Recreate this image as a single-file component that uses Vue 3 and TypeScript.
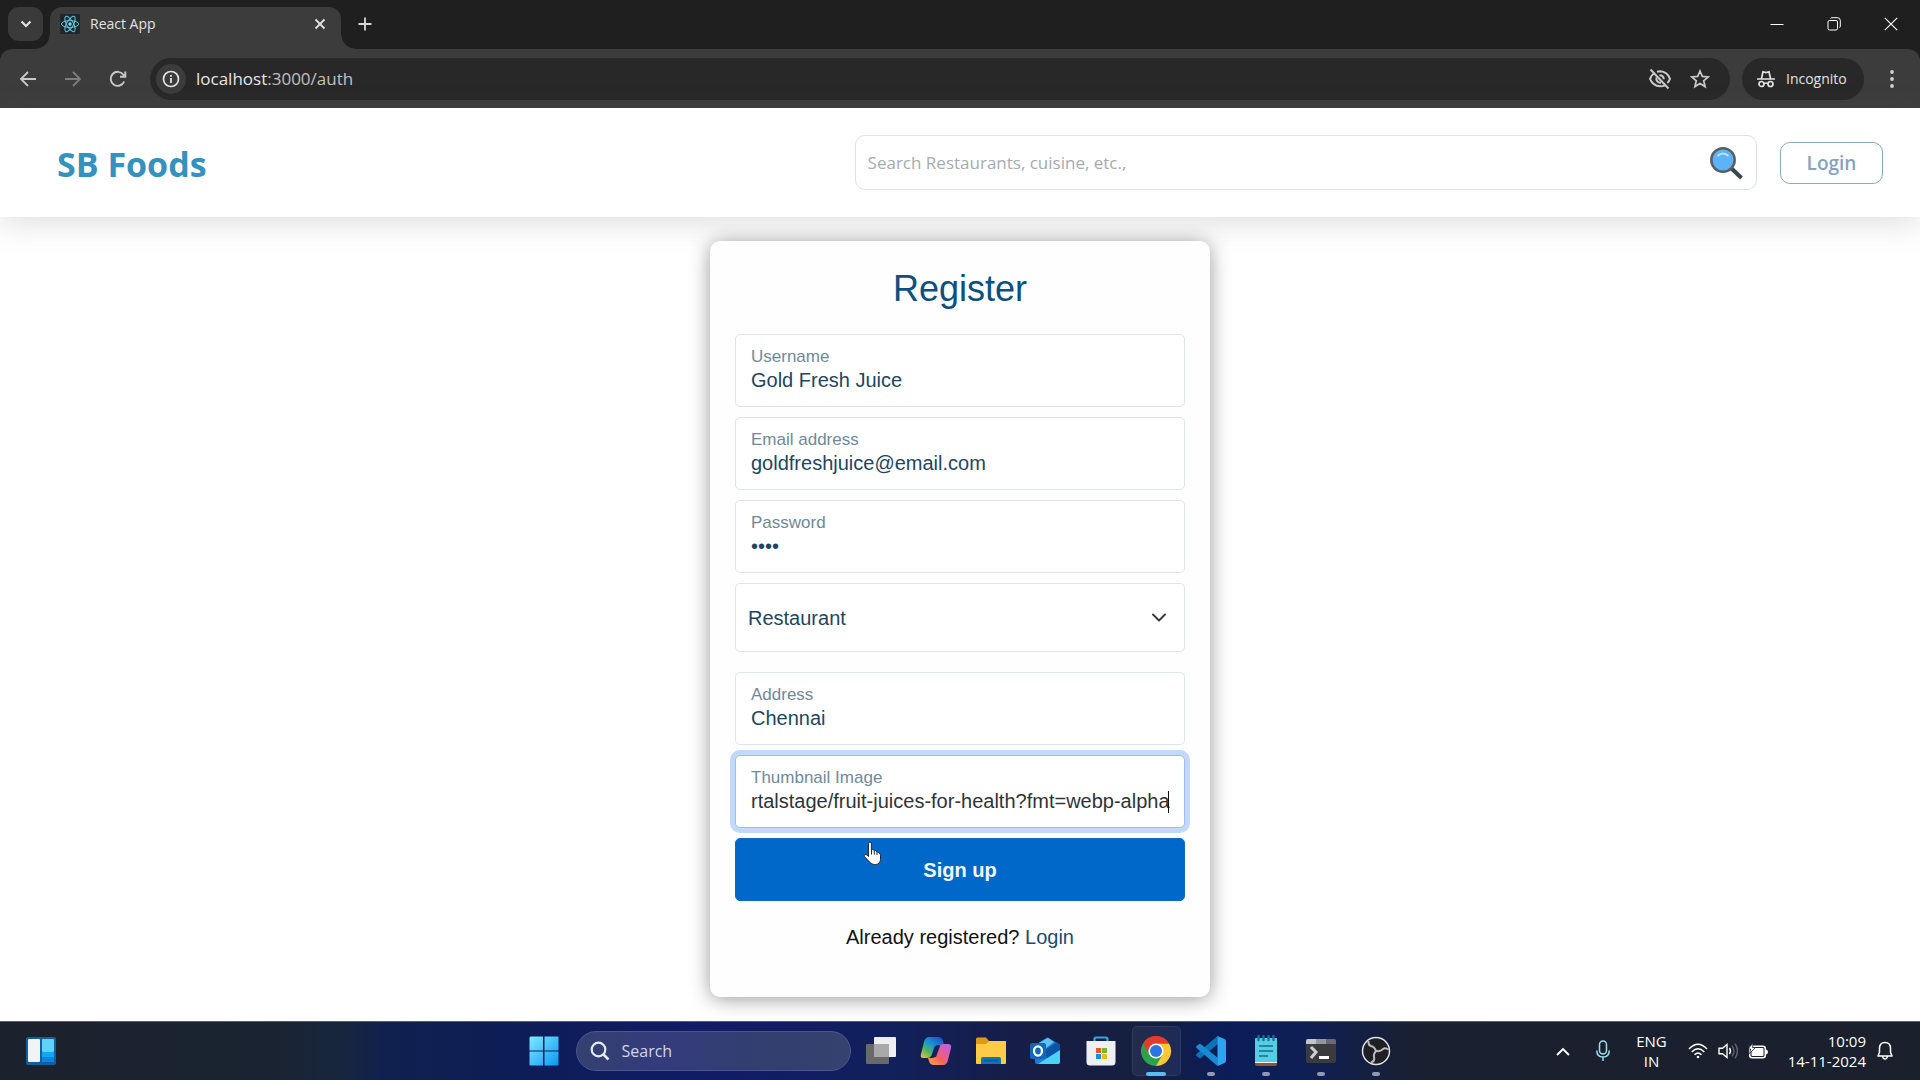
<script setup lang="ts">
import { ref } from 'vue'

interface Field {
  id: string
  label: string
  type: string
  value: string
  focused?: boolean
}

const accountFields = ref<Field[]>([
  { id: 'username', label: 'Username', type: 'text', value: 'Gold Fresh Juice' },
  { id: 'email', label: 'Email address', type: 'email', value: 'goldfreshjuice@email.com' },
  { id: 'password', label: 'Password', type: 'password', value: '1234' },
])

const restaurantFields = ref<Field[]>([
  { id: 'address', label: 'Address', type: 'text', value: 'Chennai' },
  {
    id: 'thumbnail',
    label: 'Thumbnail Image',
    type: 'text',
    value: 'rtalstage/fruit-juices-for-health?fmt=webp-alpha',
    focused: true,
  },
])

const userType = ref('Restaurant')
const query = ref('')
</script>

<template>
  <div class="screen">
    <header class="browser">
      <div class="tabs">
        <button class="tab-list" aria-label="Search tabs">
          <svg width="12" height="8" viewBox="0 0 12 8"><path d="M1.5 1.5 6 6l4.500-4.500" fill="none" stroke="#e3e3e3" stroke-width="2.200" /></svg>
        </button>
        <div class="tab">
          <svg class="favicon" width="20" height="20" viewBox="0 0 20 20">
            <rect width="20" height="20" rx="1" fill="#20262c" />
            <g fill="none" stroke="#61c5de" stroke-width="1">
              <ellipse cx="10" cy="10" rx="8.600" ry="3.400" />
              <ellipse cx="10" cy="10" rx="8.600" ry="3.400" transform="rotate(60 10 10)" />
              <ellipse cx="10" cy="10" rx="8.600" ry="3.400" transform="rotate(120 10 10)" />
            </g>
            <circle cx="10" cy="10" r="1.700" fill="#7fdcf2" />
          </svg>
          <span class="tab-title">React App</span>
          <button class="bare" aria-label="Close tab">
            <svg width="12" height="12" viewBox="0 0 12 12"><path d="m1.500 1.500 9 9m0-9-9 9" stroke="#e3e3e3" stroke-width="1.800" /></svg>
          </button>
        </div>
        <button class="bare new-tab" aria-label="New tab">
          <svg width="14" height="14" viewBox="0 0 14 14"><path d="M7 .5v13M.5 7h13" stroke="#d6d6d6" stroke-width="1.800" /></svg>
        </button>
        <div class="window-controls">
          <button class="bare" aria-label="Minimize"><svg width="14" height="14" viewBox="0 0 14 14"><path d="M.5 7.500h13" stroke="#fff" /></svg></button>
          <button class="bare" aria-label="Restore">
            <svg width="14" height="14" viewBox="0 0 14 14" fill="none" stroke="#fff"><rect x="1" y="3.500" width="9.500" height="9.500" rx="1.500" /><path d="M3.500 1.500q.5-.8 1.500-.8h5.500q2.800 0 2.800 2.800V9q0 1.200-.8 1.600" /></svg>
          </button>
          <button class="bare" aria-label="Close"><svg width="14" height="14" viewBox="0 0 14 14"><path d="m.8.800 12.400 12.400m0-12.400L.8 13.200" stroke="#fff" stroke-width="1.200" /></svg></button>
        </div>
      </div>
      <div class="toolbar">
        <nav class="history">
          <button class="bare" aria-label="Back"><svg width="18" height="18" viewBox="0 0 18 18"><path d="M17 9H2m7-7L2 9l7 7" fill="none" stroke="#c9c9c9" stroke-width="1.800" /></svg></button>
          <button class="bare" aria-label="Forward"><svg width="18" height="18" viewBox="0 0 18 18"><path d="M1 9h15M9 2l7 7-7 7" fill="none" stroke="#7d7d7d" stroke-width="1.800" /></svg></button>
          <button class="bare" aria-label="Reload"><svg width="18" height="18" viewBox="0 0 18 18"><path d="M15.200 11.500a7 7 0 1 1-.8-6.800l1.800 2M16.300 1.500v5.300H11" fill="none" stroke="#c9c9c9" stroke-width="1.900" /></svg></button>
        </nav>
        <div class="omnibox">
          <span class="site-info">
            <svg width="18" height="18" viewBox="0 0 18 18"><circle cx="9" cy="9" r="7.500" fill="none" stroke="#e3e3e3" stroke-width="1.700" /><path d="M9 8v5M9 5v1.800" stroke="#e3e3e3" stroke-width="1.800" /></svg>
          </span>
          <span class="url"><b>localhost</b>:3000/auth</span>
          <svg width="24" height="22" viewBox="0 0 24 22" fill="none" stroke="#c9c9c9" stroke-width="2">
            <path d="M6.500 5Q3.500 7 2 10.800 5 17.800 12 18.300q3 0 5.200-1M9 3.700q1.500-.4 3-.4 7.200.3 10 7.500-1 2.500-2.700 4.200" />
            <path d="M8.500 9.500q-1 4.500 4.500 5.500M11.500 7.200q4 0 4.300 4" />
            <path d="m2.500 1.500 18 19" />
          </svg>
          <svg width="20" height="20" viewBox="0 0 20 20"><path d="m10 2 2.300 5.400 5.900.5-4.500 3.900 1.400 5.800-5.100-3.100-5.100 3.100 1.400-5.800-4.500-3.900 5.900-.5z" fill="none" stroke="#c9c9c9" stroke-width="1.700" /></svg>
        </div>
        <div class="incognito">
          <svg width="18" height="18" viewBox="0 0 18 18" fill="none" stroke="#e3e3e3" stroke-width="1.700">
            <path d="M0 9h18M4.500 8.500 6 1.800l3 .8 3-.8 1.500 6.700" /><circle cx="4.500" cy="14" r="2.500" /><circle cx="13.500" cy="14" r="2.500" /><path d="M7 13.500q2-1 4 0" />
          </svg>
          <span>Incognito</span>
        </div>
        <button class="bare menu" aria-label="Menu"><svg width="4" height="20" viewBox="0 0 4 20" fill="#d0d0d0"><circle cx="2" cy="3" r="1.900" /><circle cx="2" cy="10" r="1.900" /><circle cx="2" cy="17" r="1.900" /></svg></button>
      </div>
    </header>

    <div class="site-header">
      <h1 class="brand">SB Foods</h1>
      <form class="site-search" role="search" @submit.prevent>
        <input v-model="query" type="text" aria-label="Search" placeholder="Search Restaurants, cuisine, etc.," />
        <button class="bare" aria-label="Search">
          <svg width="34" height="34" viewBox="0 0 34 34">
            <path d="m22 22 10.500 10" stroke="#37474f" stroke-width="4" />
            <circle cx="14" cy="14" r="11.700" fill="#5cb3f8" stroke="#5a5f63" stroke-width="2.500" />
            <path d="M8.500 10q5.500-5 11 0" fill="none" stroke="#c3e4fb" stroke-width="1.700" />
          </svg>
        </button>
      </form>
      <button class="login-button">Login</button>
    </div>

    <main class="page">
      <section class="card">
        <h2>Register</h2>
        <form @submit.prevent>
          <div v-for="field in accountFields" :key="field.id" class="field">
            <label :for="field.id">{{ field.label }}</label>
            <input :id="field.id" v-model="field.value" :type="field.type" />
          </div>
          <div class="select-field">
            <select v-model="userType" aria-label="User type">
              <option>Restaurant</option>
              <option>Customer</option>
              <option>Admin</option>
            </select>
            <svg width="14" height="9" viewBox="0 0 14 9"><path d="m1 1.500 6 6 6-6" fill="none" stroke="#343a40" stroke-width="1.900" stroke-linecap="round" stroke-linejoin="round" /></svg>
          </div>
          <div v-for="field in restaurantFields" :key="field.id" class="field" :class="{ focused: field.focused }">
            <label :for="field.id">{{ field.label }}</label>
            <input :id="field.id" v-model="field.value" :type="field.type" />
            <i v-if="field.focused" class="caret"></i>
          </div>
          <div class="submit-row">
            <button type="submit" class="submit">Sign up</button>
            <svg class="pointer" width="20" height="26" viewBox="0 0 20 26">
              <path d="M5.500 2.700q0-1.700 1.400-1.700t1.500 1.700v6.200q.8-1 2.200-.1.500.4.600 1 1.300-.8 2.300.5l.2.700q1.300-.5 2.200.5l.3.800q1.300.2 1.300 2v4.200q0 2-1.300 3.400-1.500 1.600-3.700 1.600h-1.200q-2.600 0-4.500-2.300L1.600 15.700q-.8-1.300.2-2 .9-.6 2 .3l1.700 1.500z" fill="#fff" stroke="#1a2a3a" stroke-width="1" />
              <path d="M8.500 9v4.500M11.300 9.800v3.700M14 11v3" stroke="#1a2a3a" stroke-width="1" />
            </svg>
          </div>
        </form>
        <p class="switch">Already registered? <a href="#login">Login</a></p>
      </section>
    </main>

    <footer class="taskbar">
      <div class="widgets">
        <svg width="30" height="28" viewBox="0 0 30 28">
          <rect width="30" height="28" rx="2" fill="#11609c" /><rect x="2" y="2" width="12" height="23" rx="1" fill="#f1f3f5" />
          <rect x="16" y="2" width="12" height="13" rx="1" fill="#5fd2fb" /><rect x="16" y="15" width="12" height="5" fill="#10a5f5" /><rect x="16" y="20" width="12" height="5" fill="#0a84e3" />
        </svg>
      </div>
      <div class="apps">
        <button class="app" aria-label="Start">
          <svg width="30" height="30" viewBox="0 0 30 30">
            <defs><linearGradient id="win" x1="0" y1="0" x2="1" y2="1"><stop offset="0" stop-color="#7fe9ff" /><stop offset="1" stop-color="#0a98f5" /></linearGradient></defs>
            <path d="M1.500.5H14v14H.5v-13zM15.500.5H29q.5 0 .5 1v13h-14zM.5 15.500H14v14H1.500q-1 0-1-1zM15.500 15.500h14v13q0 1-1 1h-13z" fill="url(#win)" />
          </svg>
        </button>
        <label class="task-search">
          <svg width="20" height="20" viewBox="0 0 20 20"><circle cx="8.500" cy="8.500" r="6.800" fill="none" stroke="#e4e8f4" stroke-width="2.200" /><path d="m13.500 13.500 5 5" stroke="#e4e8f4" stroke-width="2.500" /></svg>
          <input type="text" placeholder="Search" aria-label="Search Windows" />
        </label>
        <button class="app" aria-label="Task view">
          <svg width="30" height="30" viewBox="0 0 30 30"><rect x="0" y="8" width="23" height="20" rx="1" fill="#696969" /><rect x="8" y="1" width="22" height="20" rx="1" fill="#eeeef0" /><rect x="8" y="8" width="15" height="13" fill="#a9a9ab" /></svg>
        </button>
        <button class="app" aria-label="Copilot">
          <svg width="32" height="30" viewBox="0 0 32 30">
            <defs>
              <linearGradient id="co1" x1="0" y1="1" x2=".8" y2="0"><stop offset="0" stop-color="#f4c928" /><stop offset=".35" stop-color="#4ab36a" /><stop offset=".65" stop-color="#1690dc" /><stop offset="1" stop-color="#1f51c0" /></linearGradient>
              <linearGradient id="co2" x1="0" y1="1" x2="1" y2="0"><stop offset="0" stop-color="#fcae45" /><stop offset=".4" stop-color="#f4625f" /><stop offset=".7" stop-color="#dd5bb2" /><stop offset="1" stop-color="#a667ee" /></linearGradient>
            </defs>
            <path d="M9 1h9q4 0 5 4l1 4h-6q-3 0-4 3l-2 6q-1 4-5 4H3q-3 0-2-4L4 6Q5.500 1 9 1z" fill="url(#co1)" />
            <path d="M23 29h-9q-4 0-5-4l-1-3h4q3 0 4-3l3-8q1-3 5-3h4q4 0 3 4l-3 12q-1 5-5 5z" fill="url(#co2)" />
            <path d="m16 10-3 11h3l4-11z" fill="#172060" />
          </svg>
        </button>
        <button class="app" aria-label="File Explorer">
          <svg width="30" height="28" viewBox="0 0 30 28"><path d="M0 2q0-1.500 1.500-1.500H10l3 3.500H29q1 0 1 1v8H0z" fill="#dc9a18" /><path d="M0 7h10l3-3h16q1 0 1 1v21q0 1-1 1H1q-1 0-1-1z" fill="#fdcb45" /><path d="M5 27v-5q0-2 2-2h16q2 0 2 2v5z" fill="#0e75b8" /><path d="M8 23.500h14" stroke="#0a5796" stroke-width="1.500" /></svg>
        </button>
        <button class="app" aria-label="Outlook">
          <svg width="32" height="28" viewBox="0 0 32 28"><path d="M5 8 16.500.800Q17.500.300 18.500.8L30 8v17q0 2-2 2H7q-2 0-2-2z" fill="#1681d4" /><path d="m9 6 9-5 6 4-12 9z" fill="#63c1f2" /><path d="M30 8v8L18 22l-5-8 14-9z" fill="#0c54a8" /><path d="M30 13v12q0 2-2 2H8z" fill="#4bd2f6" /><rect x="0" y="6" width="16" height="16" rx="2" fill="#1068b7" /><ellipse cx="8" cy="14" rx="4" ry="4.600" fill="none" stroke="#fff" stroke-width="2.300" /></svg>
        </button>
        <button class="app" aria-label="Microsoft Store">
          <svg width="30" height="30" viewBox="0 0 30 30"><path d="M8.500 6V3q0-1.500 1.500-1.500h10q1.500 0 1.500 1.500v3" fill="none" stroke="#38a5df" stroke-width="2.200" /><path d="M.5 5h29v21q0 3.500-3.500 3.500H4Q.5 29.500.5 26z" fill="#eeeff1" /><path d="M10 12h5v5h-5z" fill="#e8562a" /><path d="M16 12h5v5h-5z" fill="#78b52a" /><path d="M10 18h5v5h-5z" fill="#1a8fdb" /><path d="M16 18h5v5h-5z" fill="#f5b51c" /></svg>
        </button>
        <button class="app running active" aria-label="Google Chrome">
          <svg width="32" height="32" viewBox="0 0 32 32"><path d="M16 16 3 8.500A15 15 0 0 1 29 8.500z" fill="#e33b2e" /><path d="M16 16V8.500h13A15 15 0 0 1 16 31z" fill="#fcc934" /><path d="M16 16l6.500 3.700L16 31A15 15 0 0 1 3 8.500z" fill="#2da24c" /><path d="M16 8.500h13A15 15 0 0 0 3 8.500l6.500 11.200z" fill="#e33b2e" /><circle cx="16" cy="16" r="7.600" fill="#fff" /><circle cx="16" cy="16" r="6" fill="#2b74e4" /></svg>
        </button>
        <button class="app running" aria-label="Visual Studio Code">
          <svg width="32" height="32" viewBox="0 0 32 32"><path d="m22.500 1 .5 8L5 23.500 1.500 21q-1-1 0-2z" fill="#0b73b8" /><path d="M5 8.500 23 23l-.5 8L1.500 13q-1-1 0-2z" fill="#1a8ad2" /><path d="m22.500 1 7 3q1.500 1 1.500 2v20q0 1-1.500 2l-7 3V1z" fill="#2ba5ef" /></svg>
        </button>
        <button class="app running" aria-label="Notepad">
          <svg width="24" height="32" viewBox="0 0 24 32"><path d="M1 27h22v2q0 2-2 2H3q-2 0-2-2z" fill="#8b5530" /><path d="M1 26h22v2H1z" fill="#f3f0e8" /><path d="M1 4q0-1 1-1h20q1 0 1 1v23H1z" fill="#56cde2" /><path d="M4.500 1v4M9.500 1v4M14.500 1v4M19.500 1v4" stroke="#176f9f" stroke-width="2.400" stroke-linecap="round" /><path d="M5 11h14M5 16h14M5 21h9" stroke="#126d92" stroke-width="1.700" /></svg>
        </button>
        <button class="app running" aria-label="Terminal">
          <svg width="30" height="24" viewBox="0 0 30 24"><rect width="30" height="24" rx="2" fill="#3b3b3d" /><path d="M0 5V2q0-2 2-2h8v5z" fill="#c4c5cb" /><path d="M10 0h10v5H10z" fill="#96979d" /><path d="M20 0h8q2 0 2 2v3H20z" fill="#6a6b72" /><path d="m5 8 5 5-5 6" fill="none" stroke="#ced0d3" stroke-width="3" /><path d="M13 18.500h10" stroke="#fff" stroke-width="3" /></svg>
        </button>
        <button class="app running" aria-label="OBS Studio">
          <svg width="30" height="30" viewBox="0 0 30 30"><circle cx="15" cy="15" r="13.500" fill="#201f24" stroke="#dfe1e6" stroke-width="1.500" /><g fill="none" stroke="#b9bbc0" stroke-width="2"><path d="M15 15.500Q14 11 10 10q-3-1-2.500-5" /><path d="M15 15.500Q14 11 10 10q-3-1-2.500-5" transform="rotate(120 15 15)" /><path d="M15 15.500Q14 11 10 10q-3-1-2.500-5" transform="rotate(240 15 15)" /></g></svg>
        </button>
      </div>
      <div class="tray">
        <svg width="14" height="9" viewBox="0 0 14 9"><path d="m1 8 6-6 6 6" fill="none" stroke="#fff" stroke-width="1.900" /></svg>
        <svg class="mic" width="14" height="22" viewBox="0 0 14 22" fill="none" stroke="#9edcec" stroke-width="1.500"><rect x="3.500" y="1" width="7" height="13" rx="3.500" /><path d="M.8 10.500q0 6.500 6.200 6.500t6.200-6.500M7 17v4" /></svg>
        <span class="language">ENG<br />IN</span>
        <div class="status">
          <svg width="20" height="16" viewBox="0 0 20 16" fill="none" stroke="#fff" stroke-width="1.500"><path d="M1 6q9-9.500 18 0M3.700 9q6.300-6.500 12.600 0M6.500 11.700q3.500-3.500 7 0" /><circle cx="10" cy="14" r="1.300" fill="#fff" stroke="none" /></svg>
          <svg width="20" height="18" viewBox="0 0 20 18" fill="none" stroke="#fff" stroke-width="1.400"><path d="M1 6.300h3.500L9 2.500v13l-4.500-3.800H1z" /><path d="M11.500 6q2 3 0 6" /><path d="M14 3.700q4 5.300 0 10.600M17 1.700q5 7.300 0 14.600" stroke="#5d6470" /></svg>
          <svg width="20" height="16" viewBox="0 0 20 16"><rect x="1.700" y="3.200" width="15.600" height="11.600" rx="2.500" fill="none" stroke="#fff" stroke-width="1.500" /><rect x="3.500" y="5" width="12" height="8" rx="1" fill="#fff" /><path d="M18 6.500q2 .2 2 2.500t-2 2.500z" fill="#fff" /><path d="M5 0 0 6h2.700l-1.200 4.500L7.500 4.500H4.600z" fill="#fff" stroke="#1b212c" stroke-width=".8" /></svg>
        </div>
        <span class="clock">10:09<br />14-11-2024</span>
        <svg width="16" height="20" viewBox="0 0 16 20" fill="none" stroke="#fff" stroke-width="1.500" stroke-linejoin="round"><path d="M8 1.500q-5.500 0-5.500 6v3.700L1 15h14l-1.500-3.800V7.500q0-6-5.500-6zM5.700 15.500q.3 2.500 2.300 2.500t2.300-2.500" /></svg>
      </div>
    </footer>
  </div>
</template>

<style>
body {
  margin: 0;
  background: #fff;
}
</style>

<style scoped>
* {
  box-sizing: border-box;
}

.screen {
  display: flex;
  flex-direction: column;
  min-height: 100vh;
  font-family: "Open Sans", "Noto Sans", sans-serif;
}

svg {
  display: block;
  flex: none;
}

button,
input,
select {
  margin: 0;
  font: inherit;
}

.bare {
  display: block;
  padding: 0;
  border: 0;
  background: none;
}

/* Browser window */
.browser {
  background: #1f1f1f;
  color: #e3e3e3;
}

.tabs {
  display: flex;
  height: 49px;
  padding: 7px 22px 0 8px;
}

.tab-list {
  display: grid;
  place-items: center;
  width: 35px;
  height: 34px;
  margin-right: 7px;
  padding: 0;
  border: 0;
  border-radius: 11px;
  background: #3a3a3a;
}

.tab {
  position: relative;
  display: flex;
  align-items: center;
  width: 291px;
  padding: 0 15px 8px 10px;
  border-radius: 12px 12px 0 0;
  background: #3c3c3c;
}

.tab::before,
.tab::after {
  content: "";
  position: absolute;
  bottom: 0;
  width: 14px;
  height: 14px;
}

.tab::before {
  right: 100%;
  background: radial-gradient(circle at 0 0, transparent 13px, #3c3c3c 14px);
}

.tab::after {
  left: 100%;
  background: radial-gradient(circle at 100% 0, transparent 13px, #3c3c3c 14px);
}

.tab-title {
  flex: 1;
  margin-left: 10px;
  font-size: 14px;
  line-height: 20px;
}

.new-tab {
  height: 34px;
  margin-left: 17px;
}

.window-controls {
  display: flex;
  gap: 43px;
  height: 34px;
  margin-left: auto;
}

.toolbar {
  display: flex;
  align-items: center;
  height: 59px;
  padding: 0 26px 0 19px;
  border-radius: 12px 12px 0 0;
  background: #3c3c3c;
}

.history {
  display: flex;
  gap: 27px;
  margin-right: 23px;
}

.omnibox {
  display: flex;
  flex: 1;
  align-items: center;
  gap: 18px;
  height: 42px;
  padding: 0 20px 0 6px;
  border-radius: 21px;
  background: #282828;
}

.site-info {
  display: grid;
  place-items: center;
  width: 30px;
  height: 30px;
  border-radius: 50%;
  background: #3c3c3c;
}

.url {
  flex: 1;
  margin-left: -8px;
  color: #c0c0c0;
  font-size: 17px;
  line-height: 24px;
}

.url b {
  color: #e6e6e6;
  font-weight: 400;
}

.incognito {
  display: flex;
  align-items: center;
  gap: 11px;
  width: 122px;
  height: 42px;
  margin-left: 12px;
  padding-left: 15px;
  border-radius: 21px;
  background: #282828;
  font-size: 14px;
  line-height: 20px;
}

.menu {
  margin-left: 26px;
}

/* Site header */
.site-header {
  display: flex;
  align-items: center;
  height: 109px;
  padding: 0 37px 0 57px;
  background: #fff;
  box-shadow: 0 7px 29px rgba(100, 100, 111, 0.2);
}

.brand {
  margin: 0 auto 0 0;
  padding-top: 2px;
  color: #3592bf;
  font-size: 34px;
  font-weight: 700;
  line-height: 44px;
}

.site-search {
  display: flex;
  align-items: center;
  width: 47vw;
  height: 55px;
  margin-right: 23px;
  padding: 0 13px 0 12px;
  border: 1px solid #d9e3e9;
  border-radius: 10px;
}

.site-search input {
  flex: 1;
  min-width: 0;
  padding: 0;
  border: 0;
  outline: 0;
  background: none;
  color: #333;
  font-size: 17px;
  line-height: 24px;
}

.site-search input::placeholder {
  color: #a5abae;
}

.login-button {
  width: 103px;
  height: 42px;
  padding: 0;
  border: 1px solid #8aa9c4;
  border-radius: 10px;
  background: #fff;
  color: #84a3c0;
  font-size: 19px;
  font-weight: 600;
  line-height: 24px;
}

/* Register form */
.page {
  flex: 1;
  padding: 24px 0 23px;
  color: #111;
  font-family: "Liberation Sans", Arial, sans-serif;
  font-size: 20px;
  line-height: 24px;
}

.card {
  width: 500px;
  margin: 0 auto;
  padding: 26px 25px 48px;
  border-radius: 10px;
  background: #fefefe;
  box-shadow: 0 2px 20px rgba(0, 0, 0, 0.4);
}

h2 {
  margin: 0 0 23px;
  color: #0b5080;
  font-size: 36px;
  font-weight: 400;
  line-height: 44px;
  text-align: center;
}

.field {
  position: relative;
  display: flex;
  flex-direction: column;
  height: 73px;
  margin-bottom: 10px;
  padding: 11px 15px 0;
  border: 1px solid #dbe5ed;
  border-radius: 5px;
  background: #fff;
}

.field label {
  color: #70899b;
  font-size: 17px;
  line-height: 22px;
}

.field input {
  height: 24px;
  padding: 0;
  border: 0;
  outline: 0;
  background: none;
  color: #1d4662;
}

.focused {
  padding-right: 10px;
  border-color: #9bbdf0;
  box-shadow: 0 0 0 5px #c2d9fb;
}

.focused input {
  color: #303338;
}

.caret {
  position: absolute;
  top: 35px;
  right: 15px;
  width: 1px;
  height: 22px;
  background: #111;
}

.select-field {
  display: grid;
  align-items: center;
  margin-bottom: 20px;
}

.select-field > * {
  grid-area: 1 / 1;
}

.select-field svg {
  justify-self: end;
  margin-right: 19px;
  pointer-events: none;
}

select {
  width: 100%;
  height: 69px;
  padding: 0 12px;
  border: 1px solid #dbe5ed;
  border-radius: 5px;
  outline: 0;
  appearance: none;
  background: #fff;
  color: #1d4662;
}

.submit-row {
  position: relative;
}

.submit {
  display: block;
  width: 100%;
  height: 63px;
  padding: 0;
  border: 1px solid #0d6cc6;
  border-radius: 5px;
  background: #0068c8;
  color: #f1f8ff;
  font-weight: 700;
}

.pointer {
  position: absolute;
  top: 3px;
  left: 128px;
}

.switch {
  margin: 24px 0 0;
  text-align: center;
}

.switch a {
  color: #1b4d6d;
  text-decoration: none;
}

/* Windows taskbar */
.taskbar {
  display: grid;
  grid-template-columns: 1fr auto 1fr;
  align-items: center;
  height: 59px;
  border-top: 1px solid #56616c;
  background: linear-gradient(90deg, #1b222d 0%, #1a2331 14%, #17263f 18%, #10214f 20%, #0d1d57 27%, #111c66 38%, #12205a 47%, #171d45 54%, #151f40 59%, #0b1d59 64%, #0e1f55 68%, #1a202f 74%, #1a202c 100%);
}

.widgets {
  padding-left: 26px;
}

.apps {
  display: flex;
  align-items: center;
}

.app {
  position: relative;
  display: grid;
  place-items: center;
  width: 55px;
  height: 50px;
  padding: 0;
  border: 0;
  background: none;
}

.running::after {
  content: "";
  position: absolute;
  bottom: 0;
  width: 8px;
  height: 4px;
  border-radius: 2px;
  background: #9198b5;
}

.active::before {
  content: "";
  position: absolute;
  inset: 0 3px 0 3px;
  border: 1px solid rgba(255, 255, 255, 0.07);
  border-radius: 5px;
  background: rgba(255, 255, 255, 0.06);
}

.active svg {
  position: relative;
}

.active::after {
  width: 20px;
  background: #57bcf0;
}

.task-search {
  display: flex;
  align-items: center;
  gap: 12px;
  width: 275px;
  height: 40px;
  margin: 0 3px 0 4px;
  padding: 0 13px;
  border: 1px solid #4a568e;
  border-radius: 20px;
  background: linear-gradient(90deg, #34406f, #343c7c 30%, #323f6f 70%, #35416e);
}

.task-search input {
  flex: 1;
  min-width: 0;
  padding: 0;
  border: 0;
  outline: 0;
  background: none;
  color: #fff;
  font-size: 16px;
  line-height: 22px;
}

.task-search input::placeholder {
  color: #d0d6ea;
}

.tray {
  display: flex;
  align-items: center;
  justify-content: flex-end;
  padding-right: 27px;
  color: #fff;
  font-size: 15px;
  line-height: 20px;
}

.mic {
  margin-left: 26px;
}

.language {
  margin: 0 21px 0 26px;
  text-align: center;
}

.status {
  display: flex;
  align-items: center;
  gap: 10px;
}

.clock {
  margin: 0 11px 0 20px;
  text-align: right;
}
</style>
